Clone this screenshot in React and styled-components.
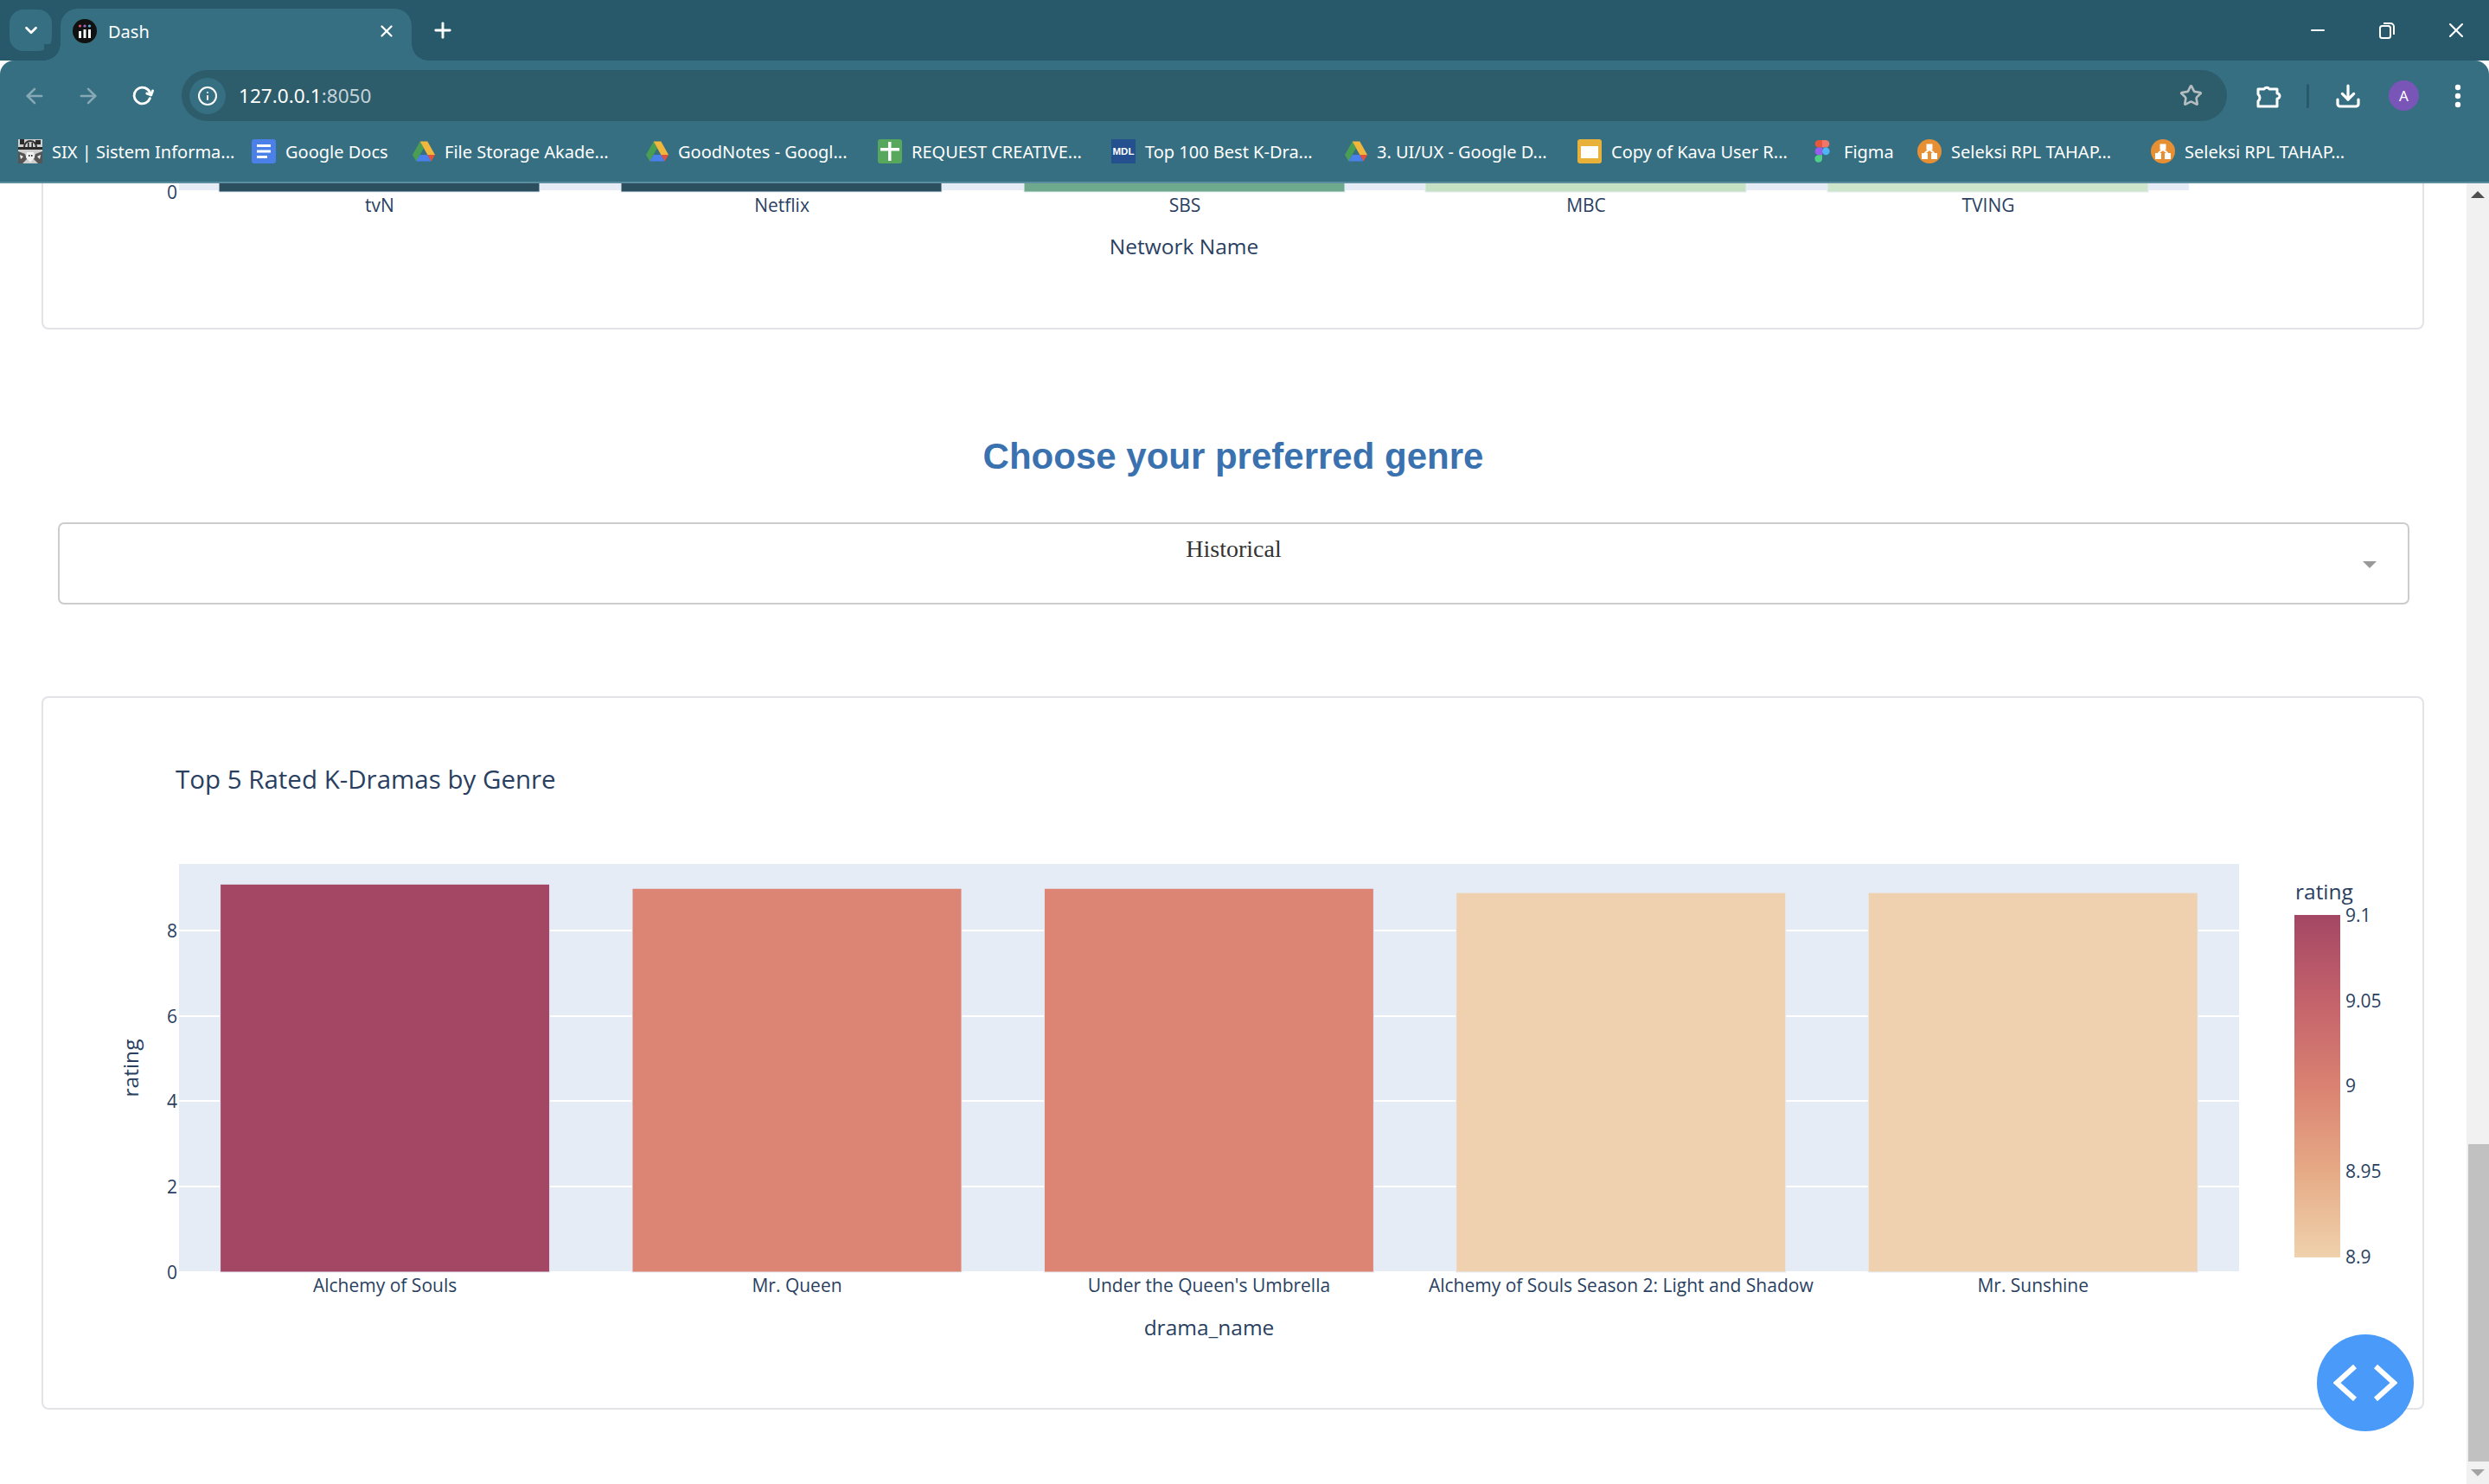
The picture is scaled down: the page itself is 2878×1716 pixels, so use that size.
import React from "react";
import styled, { createGlobalStyle } from "styled-components";
import { ArrowLeft, ArrowRight, ChevronDown, Download, Info, Minus, Plus, RotateCw, Star, X } from "lucide-react";

const GlobalStyle = createGlobalStyle`
  html, body {
    margin: 0;
    padding: 0;
    background: #fff;
    overflow: hidden;
  }
`;

const Window = styled.div`
  position: relative;
  width: 2878px;
  height: 1716px;
  display: flex;
  flex-direction: column;
  overflow: hidden;
  font-family: "Noto Sans", sans-serif;
`;

/* browser chrome */
const TabStrip = styled.div`
  height: 70px;
  flex: none;
  display: flex;
  align-items: flex-end;
  background: #28596a;
  color: #fff;
`;
const TabSearch = styled.div`
  width: 49px;
  height: 48px;
  margin: 0 10px 11px 11px;
  border-radius: 16px;
  background: #366f81;
  display: flex;
  align-items: center;
  justify-content: center;
`;
const Tab = styled.div`
  position: relative;
  width: 406px;
  height: 60px;
  box-sizing: border-box;
  padding: 0 18px 8px 14px;
  display: flex;
  align-items: center;
  background: #366f81;
  border-radius: 20px 20px 0 0;
  font-size: 20px;

  &::before,
  &::after {
    content: "";
    position: absolute;
    bottom: 0;
    width: 19px;
    height: 19px;
  }
  &::before {
    left: -19px;
    background: radial-gradient(circle at 0 0, #28596a 18.5px, #366f81 19px);
  }
  &::after {
    right: -19px;
    background: radial-gradient(circle at 100% 0, #28596a 18.5px, #366f81 19px);
  }
`;
const TabTitle = styled.span`
  flex: 1;
  margin-left: 13px;
`;
const NewTab = styled.div`
  margin: 0 0 21px 22px;
  display: flex;
`;
const WindowControls = styled.div`
  margin-left: auto;
  height: 100%;
  display: flex;
  align-items: center;
`;
const WindowButton = styled.div`
  width: 80px;
  box-sizing: border-box;
  padding-left: 4px;
  display: flex;
  justify-content: center;
`;

const Toolbar = styled.div`
  height: 70px;
  flex: none;
  box-sizing: border-box;
  padding: 11px 0 0 9px;
  display: flex;
  background: #366f81;
  border-radius: 16px 16px 0 0;
  color: #fff;
`;
const NavButton = styled.div`
  width: 62px;
  height: 59px;
  display: flex;
  align-items: center;
  justify-content: center;
  color: ${(p) => (p.$dim ? "#86a9b5" : "#fff")};
`;
const Omnibox = styled.div`
  width: 2365px;
  height: 59px;
  margin-left: 15px;
  box-sizing: border-box;
  padding: 0 28px 0 9px;
  display: flex;
  align-items: center;
  background: #2d5c6b;
  border-radius: 30px;
`;
const SiteInfo = styled.div`
  width: 42px;
  height: 42px;
  border-radius: 50%;
  background: #366f81;
  display: flex;
  align-items: center;
  justify-content: center;
`;
const Url = styled.span`
  flex: 1;
  margin-left: 15px;
  font-size: 22.6px;
  color: #fff;
  & span {
    color: #c4d3d9;
  }
`;
const ToolIcons = styled.div`
  height: 59px;
  margin-left: 33px;
  display: flex;
  align-items: center;
`;
const Separator = styled.div`
  width: 3px;
  height: 28px;
  margin: 0 29px;
  border-radius: 2px;
  background: #28596a;
`;
const Avatar = styled.div`
  width: 35px;
  height: 35px;
  margin-left: 31px;
  border-radius: 50%;
  background: #7a55b8;
  color: #fff;
  font-size: 17px;
  display: flex;
  align-items: center;
  justify-content: center;
`;
const MenuDots = styled.svg`
  margin-left: 41px;
`;

const Bookmarks = styled.div`
  height: 72px;
  flex: none;
  box-sizing: border-box;
  padding-left: 21px;
  display: flex;
  align-items: center;
  background: #366f81;
  border-bottom: 2px solid #5a8e9e;
`;
const Bookmark = styled.div`
  width: ${(p) => p.$width}px;
  flex: none;
  display: flex;
  align-items: center;
  color: #fff;
  font-size: 20px;
  white-space: nowrap;
`;
const BookmarkIcon = styled.svg`
  flex: none;
  margin-right: 11px;
`;

/* page */
const Viewport = styled.div`
  flex: 1;
  min-height: 0;
  display: flex;
`;
const Page = styled.main`
  flex: 1;
  min-width: 0;
  background: #fff;
`;
const ChartCard = styled.section`
  width: 2755px;
  margin-left: 48px;
  box-sizing: border-box;
  border: 2px solid #e2e3e6;
  border-radius: 8px;
  background: #fff;
  ${(p) => p.$cut && "border-top: none; border-radius: 0 0 8px 8px;"}
`;
const ChartSvg = styled.svg`
  display: block;
`;
const Heading = styled.h2`
  height: 223px;
  box-sizing: border-box;
  margin: 0;
  padding-top: 117px;
  text-align: center;
  font: bold 42px/60px "Liberation Sans", Arial, sans-serif;
  color: #3a72b0;
`;
const Dropdown = styled.div`
  position: relative;
  width: 2719px;
  height: 95px;
  margin: 0 0 106px 67px;
  box-sizing: border-box;
  padding-top: 10px;
  border: 2px solid #ccc;
  border-radius: 7px;
  text-align: center;
  font: 28px/38px "Liberation Serif", "Times New Roman", serif;
  color: #333;
`;
const Caret = styled.span`
  position: absolute;
  right: 36px;
  top: 43px;
  border-top: 8px solid #999;
  border-left: 8px solid transparent;
  border-right: 8px solid transparent;
`;
const Scrollbar = styled.div`
  width: 26px;
  flex: none;
  display: flex;
  flex-direction: column;
  align-items: flex-end;
  background: #f1f1f1;
`;
const ScrollArrow = styled.div`
  width: 100%;
  height: 26px;
  flex: none;
  display: flex;
  align-items: center;
  justify-content: center;
  &::after {
    content: "";
    border-left: 8px solid transparent;
    border-right: 8px solid transparent;
    ${(p) => (p.$down ? "border-top: 8px solid #a3a3a3;" : "border-bottom: 8px solid #505050;")}
  }
`;
const ScrollTrack = styled.div`
  flex: 1;
  width: 100%;
`;
const ScrollThumb = styled.div`
  width: 24px;
  height: 367px;
  margin: 1085px 0 0 2px;
  background: #c1c1c1;
`;
const DebugButton = styled.div`
  position: absolute;
  right: 87px;
  bottom: 61px;
  width: 112px;
  height: 112px;
  border-radius: 50%;
  background: #4a9bf9;
  display: flex;
  align-items: center;
  justify-content: center;
`;

/* chart text */
const AxisText = styled.text`
  font-family: "Open Sans", sans-serif;
  font-size: ${(p) => p.$size || 21}px;
  fill: #2a3f5f;
`;

const PLOT_BG = "#e5ecf6";
const BAR_LINE = "#e5ecf6";

const networkBars = [
  { name: "tvN", x: 253, color: "#2c4f5f" },
  { name: "Netflix", x: 718, color: "#2c4f5f" },
  { name: "SBS", x: 1184, color: "#6fa98d" },
  { name: "MBC", x: 1648, color: "#c4e2c3" },
  { name: "TVING", x: 2113, color: "#cde5ca" },
];

const genreBars = [
  { name: "Alchemy of Souls", rating: 9.1, color: "#a44764" },
  { name: "Mr. Queen", rating: 9, color: "#dc8575" },
  { name: "Under the Queen's Umbrella", rating: 9, color: "#dc8575" },
  { name: "Alchemy of Souls Season 2: Light and Shadow", rating: 8.9, color: "#efd1af" },
  { name: "Mr. Sunshine", rating: 8.9, color: "#efd1af" },
];

const yTicks = [
  { label: "8", y: 1076 },
  { label: "6", y: 1175 },
  { label: "4", y: 1273 },
  { label: "2", y: 1372 },
  { label: "0", y: 1471 },
];

const legendTicks = [
  { label: "9.1", y: 1058 },
  { label: "9.05", y: 1157 },
  { label: "9", y: 1255 },
  { label: "8.95", y: 1354 },
  { label: "8.9", y: 1453 },
];

function NetworkChart() {
  return (
    <ChartSvg width="2751" height="167" viewBox="50 212 2751 167">
      <rect x="207" y="212" width="2324" height="8" fill={PLOT_BG} />
      {networkBars.map((b) => (
        <g key={b.name}>
          <rect x={b.x} y="210" width="371" height="12" fill={b.color} stroke={BAR_LINE} strokeWidth="1" />
          <AxisText x={b.x + 186} y="237" textAnchor="middle" dominantBaseline="central">
            {b.name}
          </AxisText>
        </g>
      ))}
      <AxisText x="205" y="222" textAnchor="end" dominantBaseline="central">0</AxisText>
      <AxisText x="1369" y="284" $size={24.5} textAnchor="middle" dominantBaseline="central">
        Network Name
      </AxisText>
    </ChartSvg>
  );
}

function GenreChart() {
  return (
    <ChartSvg width="2751" height="821" viewBox="50 807 2751 821">
      <defs>
        <linearGradient id="ratingScale" x1="0" y1="0" x2="0" y2="1">
          <stop offset="0" stopColor="#a44764" />
          <stop offset="0.25" stopColor="#c4626b" />
          <stop offset="0.5" stopColor="#da8272" />
          <stop offset="0.75" stopColor="#e6aa86" />
          <stop offset="1" stopColor="#efd2ad" />
        </linearGradient>
      </defs>
      <AxisText x="203" y="900" $size={29.5} dominantBaseline="central">
        Top 5 Rated K-Dramas by Genre
      </AxisText>

      <rect x="207" y="999" width="2382" height="471" fill={PLOT_BG} />
      {yTicks.slice(0, 4).map((t) => (
        <rect key={t.label} x="207" y={t.y - 1} width="2382" height="2" fill="#fff" />
      ))}
      {genreBars.map((b, i) => {
        const x = 254.6 + i * 476.4;
        const top = 1470 - b.rating * 49.2;
        return (
          <g key={b.name}>
            <rect x={x} y={top} width="381" height={1471 - top} fill={b.color} stroke={BAR_LINE} strokeWidth="1" />
            <AxisText x={x + 190.5} y="1486" textAnchor="middle" dominantBaseline="central">
              {b.name}
            </AxisText>
          </g>
        );
      })}
      {yTicks.map((t) => (
        <AxisText key={t.label} x="205" y={t.y} textAnchor="end" dominantBaseline="central">
          {t.label}
        </AxisText>
      ))}
      <AxisText
        x="150"
        y="1235"
        $size={24.5}
        textAnchor="middle"
        dominantBaseline="central"
        transform="rotate(-90 150 1235)"
      >
        rating
      </AxisText>
      <AxisText x="1398" y="1534" $size={24.5} textAnchor="middle" dominantBaseline="central">
        drama_name
      </AxisText>

      <AxisText x="2654" y="1030" $size={24.5} dominantBaseline="central">rating</AxisText>
      <rect x="2653" y="1058" width="53" height="396" fill="url(#ratingScale)" />
      {legendTicks.map((t) => (
        <AxisText key={t.label} x="2712" y={t.y} dominantBaseline="central">
          {t.label}
        </AxisText>
      ))}
    </ChartSvg>
  );
}

/* favicons */
const SixIcon = () => (
  <BookmarkIcon width="28" height="28" viewBox="0 0 28 28">
    <rect width="28" height="28" fill="#cfcfcf" />
    <path d="M0 9h28v3H0zM2 0h5v6H2zM20 1h6v5h-6z" fill="#2b2b2b" />
    <path d="M7 9a7 7 0 0 1 14 0" fill="none" stroke="#333" strokeWidth="2" />
    <path d="M11 4h1.500v5H11zM15.500 4H17v5h-1.500z" fill="#222" />
    <path d="M0 14l8 3 2 6-5 5H0zM28 14l-8 3-2 6 5 5h5z" fill="#555" />
    <path d="M10 15h8l1 6-5 6-5-6z" fill="#f2f2f2" />
    <path d="M2 18l4 2-3 3zM26 18l-4 2 3 3z" fill="#eee" />
    <path d="M12 18h1.500v2H12zM15 18h1.500v2H15z" fill="#333" />
  </BookmarkIcon>
);
const DocsIcon = () => (
  <BookmarkIcon width="28" height="28" viewBox="0 0 28 28">
    <rect width="28" height="28" rx="3" fill="#4a80e8" />
    <path d="M6 6h16v3H6zM6 12.500h16v3H6zM6 19h12v3H6z" fill="#fff" />
  </BookmarkIcon>
);
const DriveIcon = () => (
  <BookmarkIcon width="26" height="28" viewBox="0 -2.500 26 28">
    <polygon points="8.700,0 13,7.700 4.300,23 0,15.500" fill="#4a9e54" />
    <polygon points="8.700,0 17.300,0 26,15.500 17.300,15.500" fill="#f0b73c" />
    <polygon points="8.700,15.500 17.300,15.500 21.700,23 4.300,23" fill="#4a80ea" />
    <polygon points="17.300,15.500 26,15.500 21.700,23" fill="#e2503e" />
  </BookmarkIcon>
);
const SheetsIcon = () => (
  <BookmarkIcon width="28" height="28" viewBox="0 0 28 28">
    <rect width="28" height="28" rx="3" fill="#57a75c" />
    <path d="M3 10h22v3.500H3zM12 3h3.500v22H12z" fill="#fff" />
  </BookmarkIcon>
);
const MdlIcon = () => (
  <BookmarkIcon width="28" height="28" viewBox="0 0 28 28">
    <rect width="28" height="28" fill="#24508f" />
    <text x="14" y="18" textAnchor="middle" fontFamily="Liberation Sans, sans-serif" fontWeight="700" fontSize="11" textLength="25" lengthAdjust="spacingAndGlyphs" fill="#fff">MDL</text>
  </BookmarkIcon>
);
const SlidesIcon = () => (
  <BookmarkIcon width="28" height="28" viewBox="0 0 28 28">
    <rect width="28" height="28" rx="3" fill="#e8b23a" />
    <rect x="4" y="8" width="20" height="14" fill="#fff" />
  </BookmarkIcon>
);
const FigmaIcon = () => (
  <BookmarkIcon width="18" height="26" viewBox="0 0 18 26" style={{ margin: "0 16px 0 5px" }}>
    <path d="M9 0H5a4.300 4.300 0 0 0 0 8.600h4z" fill="#e8573a" />
    <path d="M9 0h4a4.300 4.300 0 0 1 0 8.600H9z" fill="#f0766a" />
    <path d="M9 8.600H5a4.300 4.300 0 0 0 0 8.600h4z" fill="#9a5cf0" />
    <circle cx="13.300" cy="12.900" r="4.300" fill="#4fb4f5" />
    <path d="M5 17.200h4v4.400a4.300 4.300 0 1 1-4-4.400z" fill="#4fcf85" />
  </BookmarkIcon>
);
const OrangeIcon = () => (
  <BookmarkIcon width="28" height="28" viewBox="0 0 28 28">
    <circle cx="14" cy="14" r="14" fill="#e78f33" />
    <path d="M10.500 5.500h7v7h-7zM5 16h7v7H5zM16 16h7v7h-7z" fill="#fff" />
    <path d="M14 12L8.500 16M14 12l5.500 4" stroke="#fff" strokeWidth="2" />
  </BookmarkIcon>
);
const DashIcon = () => (
  <svg width="28" height="28" viewBox="0 0 28 28" style={{ flex: "none" }}>
    <circle cx="14" cy="14" r="14" fill="#111" />
    <path d="M7 14h3v8H7zM12.500 12h3v10h-3zM18 12h3v10h-3z" fill="#fff" />
    <circle cx="8.500" cy="8" r="1.600" fill="#e0557a" />
    <circle cx="14" cy="8" r="1.600" fill="#a86bd0" />
    <circle cx="19.500" cy="8" r="1.600" fill="#5ab4e0" />
  </svg>
);

const bookmarks = [
  { label: "SIX | Sistem Informa...", width: 270, Icon: SixIcon },
  { label: "Google Docs", width: 186, Icon: DocsIcon },
  { label: "File Storage Akade...", width: 270, Icon: DriveIcon },
  { label: "GoodNotes - Googl...", width: 268, Icon: DriveIcon },
  { label: "REQUEST CREATIVE...", width: 270, Icon: SheetsIcon },
  { label: "Top 100 Best K-Dra...", width: 270, Icon: MdlIcon },
  { label: "3. UI/UX - Google D...", width: 269, Icon: DriveIcon },
  { label: "Copy of Kava User R...", width: 269, Icon: SlidesIcon },
  { label: "Figma", width: 124, Icon: FigmaIcon },
  { label: "Seleksi RPL TAHAP...", width: 270, Icon: OrangeIcon },
  { label: "Seleksi RPL TAHAP...", width: 270, Icon: OrangeIcon },
];

export default function App() {
  return (
    <Window>
      <GlobalStyle />
      <TabStrip>
        <TabSearch>
          <ChevronDown size={22} strokeWidth={3} />
        </TabSearch>
        <Tab>
          <DashIcon />
          <TabTitle>Dash</TabTitle>
          <X size={22} strokeWidth={2.5} />
        </Tab>
        <NewTab>
          <Plus size={28} strokeWidth={2.5} />
        </NewTab>
        <WindowControls>
          <WindowButton>
            <Minus size={24} strokeWidth={2} />
          </WindowButton>
          <WindowButton>
            <svg width="20" height="20" viewBox="0 0 20 20" fill="none" stroke="#fff" strokeWidth="2">
              <rect x="2" y="5" width="12" height="14" rx="2.500" />
              <path d="M6 2h8a4 4 0 0 1 4 4v9" />
            </svg>
          </WindowButton>
          <WindowButton>
            <X size={28} strokeWidth={1.8} />
          </WindowButton>
        </WindowControls>
      </TabStrip>

      <Toolbar>
        <NavButton $dim>
          <ArrowLeft size={28} strokeWidth={2.2} />
        </NavButton>
        <NavButton $dim>
          <ArrowRight size={28} strokeWidth={2.2} />
        </NavButton>
        <NavButton>
          <RotateCw size={25} strokeWidth={2.8} style={{ transform: "rotate(20deg)" }} />
        </NavButton>
        <Omnibox>
          <SiteInfo>
            <Info size={24} strokeWidth={2} />
          </SiteInfo>
          <Url>
            127.0.0.1<span>:8050</span>
          </Url>
          <Star size={27} strokeWidth={2.4} color="#b4bdc0" />
        </Omnibox>
        <ToolIcons>
          <svg width="30" height="30" viewBox="0 0 30 30" fill="none" stroke="#fff" strokeWidth="3" strokeLinejoin="round">
            <path d="M3 7H10A3.500 3.500 0 0 1 16 7H25V12A3 3 0 0 1 25 18V27H3V21A5 5 0 0 0 3 13Z" />
          </svg>
          <Separator />
          <Download size={32} strokeWidth={2.4} />
          <Avatar>A</Avatar>
          <MenuDots width="8" height="30" viewBox="0 0 8 30" fill="#fff">
            <circle cx="4" cy="5" r="3.200" />
            <circle cx="4" cy="15" r="3.200" />
            <circle cx="4" cy="25" r="3.200" />
          </MenuDots>
        </ToolIcons>
      </Toolbar>

      <Bookmarks>
        {bookmarks.map(({ label, width, Icon }, i) => (
          <Bookmark key={i} $width={width}>
            <Icon />
            {label}
          </Bookmark>
        ))}
      </Bookmarks>

      <Viewport>
        <Page>
          <ChartCard $cut>
            <NetworkChart />
          </ChartCard>
          <Heading>Choose your preferred genre</Heading>
          <Dropdown>
            Historical
            <Caret />
          </Dropdown>
          <ChartCard>
            <GenreChart />
          </ChartCard>
        </Page>
        <Scrollbar>
          <ScrollArrow />
          <ScrollTrack>
            <ScrollThumb />
          </ScrollTrack>
          <ScrollArrow $down />
        </Scrollbar>
      </Viewport>

      <DebugButton>
        <svg width="74" height="44" viewBox="0 0 74 44" fill="none" stroke="#fff" strokeWidth="6">
          <path d="M25 3L4 22l21 19" />
          <path d="M49 3l21 19-21 19" />
        </svg>
      </DebugButton>
    </Window>
  );
}
